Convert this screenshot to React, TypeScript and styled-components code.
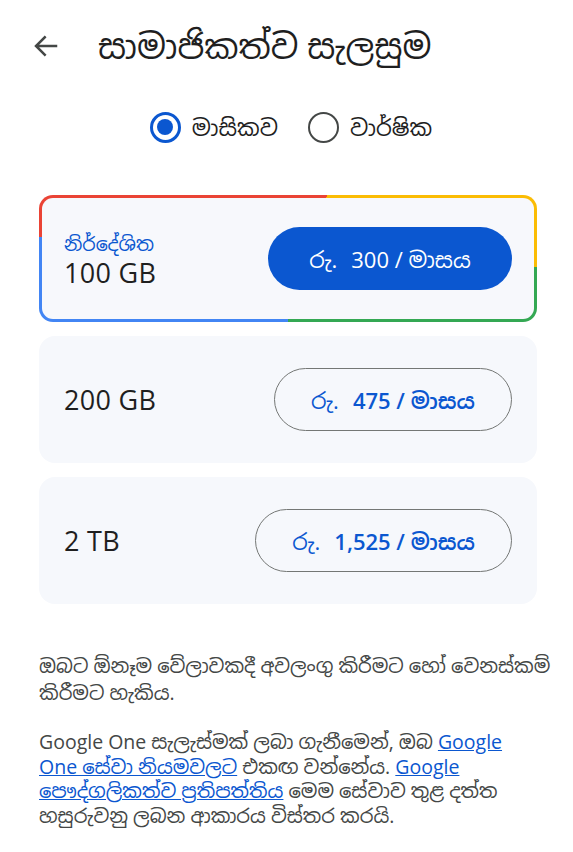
import React from "react";
import styled, { createGlobalStyle } from "styled-components";

const SANS = `"Open Sans", "Noto Sans Sinhala", "Noto Serif Sinhala", "Lohit Sinhala", "Iskoola Pota", "Noto Sans", sans-serif`;

const Global = createGlobalStyle`
  html, body { margin: 0; padding: 0; background: #ffffff; }
  body { font-family: ${SANS}; color: #1f1f1f; }
  * { box-sizing: border-box; }
`;

const Page = styled.div`
  width: 573px;
  min-height: 852px;
  padding: 0 36px 0 39px;
  display: flex;
  flex-direction: column;
`;

const Header = styled.header`
  display: flex;
  align-items: center;
  height: 92px;
  gap: 36px;
  margin-left: -9px;
`;

const BackButton = styled.button`
  width: 32px;
  height: 32px;
  padding: 0;
  border: 0;
  background: transparent;
  display: flex;
  align-items: center;
  justify-content: center;
  color: #444746;
`;

const Title = styled.h1`
  margin: 0;
  font-size: 34px;
  font-weight: 400;
  color: #1f1f1f;
`;

const Toggle = styled.div`
  display: flex;
  justify-content: center;
  align-items: center;
  gap: 30px;
  height: 70px;
  margin-bottom: 33px;
  padding-left: 6px;
`;

const RadioOption = styled.label`
  display: flex;
  align-items: center;
  gap: 11px;
  font-size: 22.5px;
  color: #1f1f1f;
`;

const RadioCircle = styled.span<{ $checked?: boolean }>`
  width: 31px;
  height: 31px;
  border-radius: 50%;
  border: ${(p) => (p.$checked ? "3px solid #0b57d0" : "2.5px solid #444746")};
  display: flex;
  align-items: center;
  justify-content: center;
  &::after {
    content: "";
    width: 16px;
    height: 16px;
    border-radius: 50%;
    background: ${(p) => (p.$checked ? "#0b57d0" : "transparent")};
  }
`;

const Plans = styled.div`
  display: flex;
  flex-direction: column;
  gap: 14px;
`;

const PlanCard = styled.div<{ $featured?: boolean }>`
  height: 127px;
  border-radius: 16px;
  display: flex;
  align-items: center;
  justify-content: space-between;
  padding: 0 25px;
  background: #f6f8fc;
  ${(p) =>
    p.$featured
      ? `
    border: 3px solid transparent;
    border-radius: 14px;
    padding: 0 22px;
    background:
      linear-gradient(#f7f8fc, #f7f8fc) padding-box,
      conic-gradient(from 32deg at 50% 50%, #fbbc04 0deg 60deg, #34a853 60deg 148deg, #4285f4 148deg 243deg, #ea4335 243deg 360deg) border-box;
  `
      : ""}
`;

const PlanInfo = styled.div`
  display: flex;
  flex-direction: column;
`;

const Badge = styled.span`
  color: #0b57d0;
  font-size: 19px;
  line-height: 24px;
  margin-top: 4px;
`;

const Size = styled.span`
  font-size: 27px;
  line-height: 34px;
  color: #1f1f1f;
  letter-spacing: 0.3px;
`;

const PriceButton = styled.button<{ $primary?: boolean }>`
  height: 63px;
  border-radius: 32px;
  font-family: ${SANS};
  font-size: 22px;
  display: flex;
  align-items: center;
  justify-content: center;
  padding: 0 36px;
  cursor: pointer;
  ${(p) =>
    p.$primary
      ? `
    background: #0b57d0;
    color: #ffffff;
    border: 0;
    width: 244px;
  `
      : `
    background: transparent;
    color: #0b57d0;
    border: 1.5px solid #747775;
  `}
`;

const Amount = styled.span<{ $bold?: boolean }>`
  font-weight: ${(p) => (p.$bold ? 600 : 400)};
  margin-left: 14px;
`;

const Notes = styled.div`
  margin-top: 48px;
  display: flex;
  flex-direction: column;
  gap: 24px;
`;

const Note = styled.p<{ $tall?: boolean; $wide?: boolean }>`
  margin: 0 ${(p) => (p.$wide ? "-18px" : "0")} 0 0;
  max-width: ${(p) => (p.$wide ? "none" : "481px")};
  font-size: 19.5px;
  line-height: ${(p) => (p.$tall ? "27px" : "24.5px")};
  color: #444746;
`;

const Link = styled.a`
  color: #0b57d0;
  text-decoration: underline;
`;

const plans = [
  { size: "100 GB", price: "300", featured: true },
  { size: "200 GB", price: "475" },
  { size: "2 TB", price: "1,525" },
];

export default function App() {
  return (
    <>
      <Global />
      <Page>
        <Header>
          <BackButton aria-label="back">
            <svg width="30" height="30" viewBox="0 0 24 24" fill="none">
              <path
                d="M20 12H4.5M11 5l-7 7 7 7"
                stroke="#444746"
                strokeWidth="2"
                strokeLinecap="square"
              />
            </svg>
          </BackButton>
          <Title>සාමාජිකත්ව සැලසුම</Title>
        </Header>
        <Toggle>
          <RadioOption>
            <RadioCircle $checked />
            මාසිකව
          </RadioOption>
          <RadioOption>
            <RadioCircle />
            වාර්ෂික
          </RadioOption>
        </Toggle>
        <Plans>
          {plans.map((p) => (
            <PlanCard key={p.size} $featured={p.featured}>
              <PlanInfo>
                {p.featured && <Badge>නිර්දේශිත</Badge>}
                <Size>{p.size}</Size>
              </PlanInfo>
              <PriceButton $primary={p.featured}>
                රු.
                <Amount $bold={!p.featured}>
                  {p.price} / මාසය
                </Amount>
              </PriceButton>
            </PlanCard>
          ))}
        </Plans>
        <Notes>
          <Note $tall $wide>
            ඔබට ඕනෑම වේලාවකදී අවලංගු කිරීමට හෝ වෙනස්කම් කිරීමට හැකිය.
          </Note>
          <Note>
            Google One සැලැස්මක් ලබා ගැනීමෙන්, ඔබ{" "}
            <Link href="#">Google One සේවා නියමවලට</Link> එකඟ වන්නේය.{" "}
            <Link href="#">Google පෞද්ගලිකත්ව ප්‍රතිපත්තිය</Link> මෙම සේවාව තුළ දත්ත
            හසුරුවනු ලබන ආකාරය විස්තර කරයි.
          </Note>
        </Notes>
      </Page>
    </>
  );
}
